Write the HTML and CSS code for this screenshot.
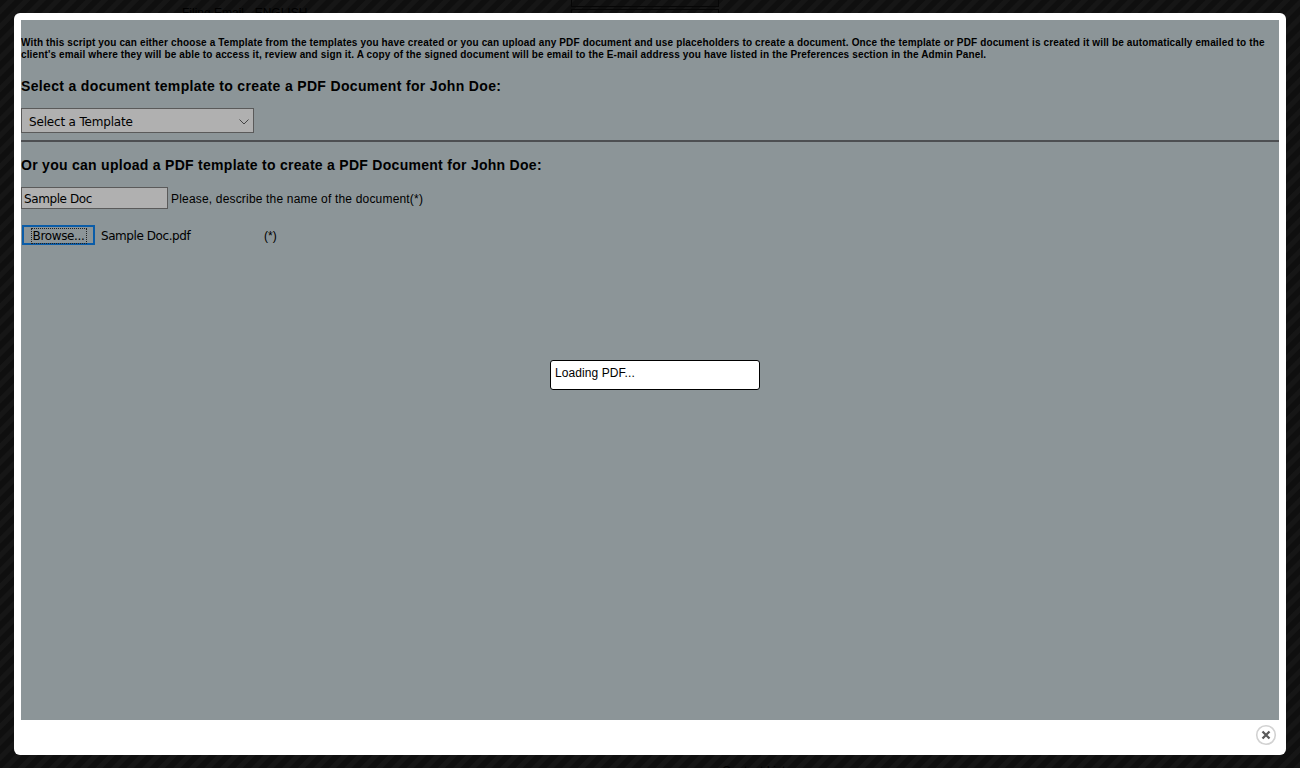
FILE: index.html
```html
<!DOCTYPE html>
<html lang="en">
<head>
    <meta charset="UTF-8">
    <title>Create PDF Document</title>
    <link rel="stylesheet" href="styles.css">
</head>
<body>

    <div class="backdrop-text">Filing Email - ENGLISH</div>
    <div class="backdrop-box"></div>
    <div class="backdrop-box backdrop-box-next"></div>
    <div class="backdrop-foot">Contact List</div>

    <div class="modal">
        <div class="panel">
            <p class="intro">With this script you can either choose a Template from the templates you have created or you can upload any PDF document and use placeholders to create a document. Once the template or PDF document is created it will be automatically emailed to the client's email where they will be able to access it, review and sign it. A copy of the signed document will be email to the E-mail address you have listed in the Preferences section in the Admin Panel.</p>

            <h3>Select a document template to create a PDF Document for John Doe:</h3>
            <div class="select-wrap">
                <select class="template-select">
                    <option>Select a Template</option>
                </select>
                <svg class="select-arrow" width="10" height="6" viewBox="0 0 10 6">
                    <path d="M0.5 0.5L5 5L9.5 0.5" fill="none" stroke="#444" stroke-width="1"/>
                </svg>
            </div>

            <hr class="divider">

            <h3>Or you can upload a PDF template to create a PDF Document for John Doe:</h3>
            <div class="name-row">
                <input type="text" class="name-input" value="Sample Doc">
                <span class="hint">Please, describe the name of the document(*)</span>
            </div>
            <div class="file-row">
                <button type="button" class="browse-btn"><span>Browse...</span></button>
                <span class="file-name">Sample Doc.pdf</span>
                <span class="required">(*)</span>
            </div>
        </div>

        <div class="loading">Loading PDF...</div>

        <a class="close-btn" href="#" aria-label="Close">
            <svg width="22" height="22" viewBox="0 0 22 22">
                <circle cx="11" cy="11" r="9.3" fill="#fff" stroke="#d2d2d2" stroke-width="1.6"/>
                <path d="M7.5 7.5L14.5 14.5M14.5 7.5L7.5 14.5" stroke="#5a5a5a" stroke-width="2.3" fill="none"/>
            </svg>
        </a>
    </div>

</body>
</html>
```

FILE: styles.css
```css
html, body {
    height: 100%;
}
body {
    margin: 0;
    overflow: hidden;
    position: relative;
    font-family: "Liberation Sans", Arial, sans-serif;
    color: #000;
    background-color: #111;
    background-image: repeating-linear-gradient(135deg, #0f0f0f 0, #0f0f0f 5px, #161616 6px, #161616 10px, #0f0f0f 11px);
}
.backdrop-text {
    position: absolute;
    left: 182px;
    top: 6px;
    font-size: 12px;
    color: #000;
}
.backdrop-box {
    position: absolute;
    left: 571px;
    top: -4px;
    width: 146px;
    height: 9px;
    border: 1px solid #060606;
}
.backdrop-box-next {
    top: 9px;
    height: 20px;
}
.backdrop-foot {
    position: absolute;
    left: 722px;
    top: 764px;
    font-size: 12px;
    color: #000;
}
.modal {
    position: relative;
    box-sizing: border-box;
    width: 1272px;
    height: 742px;
    margin: 13px 14px 0;
    padding: 7px;
    background-color: #fff;
    border-radius: 6px;
}
.panel {
    box-sizing: border-box;
    height: 700px;
    padding-top: 17px;
    background-color: #8c9598;
    overflow: hidden;
}
.intro {
    margin: 0;
    font-size: 10px;
    font-weight: bold;
    line-height: 12px;
    letter-spacing: 0.14px;
}
h3 {
    margin: 0;
    font-size: 14px;
    font-weight: bold;
    line-height: 16px;
    letter-spacing: 0.34px;
}
.panel > h3:first-of-type {
    margin-top: 17px;
}
.select-wrap {
    position: relative;
    width: 233px;
    height: 25px;
    margin-top: 14px;
}
.template-select {
    display: block;
    box-sizing: border-box;
    width: 233px;
    height: 25px;
    padding: 2px 0 0 7px;
    appearance: none;
    background-color: #b0b0b0;
    border: 1px solid #5a5a5a;
    border-radius: 0;
    font-family: "DejaVu Sans", sans-serif;
    font-size: 12px;
    letter-spacing: -0.18px;
    color: #000;
}
.select-arrow {
    position: absolute;
    right: 5px;
    top: 11px;
}
.divider {
    height: 2px;
    margin: 7px 0 0;
    border: 0;
    background-color: #4d4f52;
}
.divider + h3 {
    margin-top: 15px;
    letter-spacing: 0.28px;
}
.name-row {
    display: flex;
    align-items: center;
    gap: 3px;
    margin-top: 14px;
}
.name-input {
    box-sizing: border-box;
    width: 147px;
    height: 22px;
    padding: 1px 2px 0;
    background-color: #b0b0b0;
    border: 1px solid #5a5a5a;
    font-family: "DejaVu Sans", sans-serif;
    font-size: 12px;
    letter-spacing: -0.4px;
    color: #000;
}
.hint {
    padding-top: 2px;
    font-size: 12px;
    letter-spacing: 0.18px;
}
.file-row {
    display: flex;
    align-items: center;
    margin-top: 16px;
    margin-left: 1px;
    font-family: "DejaVu Sans", sans-serif;
    font-size: 12px;
}
.browse-btn {
    box-sizing: border-box;
    width: 73px;
    height: 20px;
    padding: 1px 0 0;
    background-color: #8c9598;
    border: 2px solid #0a5ca8;
    font-family: "DejaVu Sans", sans-serif;
    font-size: 12px;
    letter-spacing: -0.35px;
    color: #000;
}
.browse-btn span {
    display: inline-block;
    padding: 0 1px;
    line-height: 14px;
    outline: 1px dotted #222;
}
.file-name {
    width: 163px;
    margin-left: 6px;
    padding-top: 1px;
    letter-spacing: -0.43px;
}
.required {
    padding-top: 1px;
    font-family: "Liberation Sans", Arial, sans-serif;
    font-size: 12px;
}
.loading {
    position: absolute;
    left: 536px;
    top: 347px;
    box-sizing: border-box;
    width: 210px;
    height: 30px;
    padding: 5px 4px;
    background-color: #fff;
    border: 1px solid #000;
    border-radius: 3px;
    font-size: 12px;
    letter-spacing: 0.08px;
    line-height: 15px;
}
.close-btn {
    position: absolute;
    right: 9px;
    bottom: 9px;
    width: 22px;
    height: 22px;
}
```
